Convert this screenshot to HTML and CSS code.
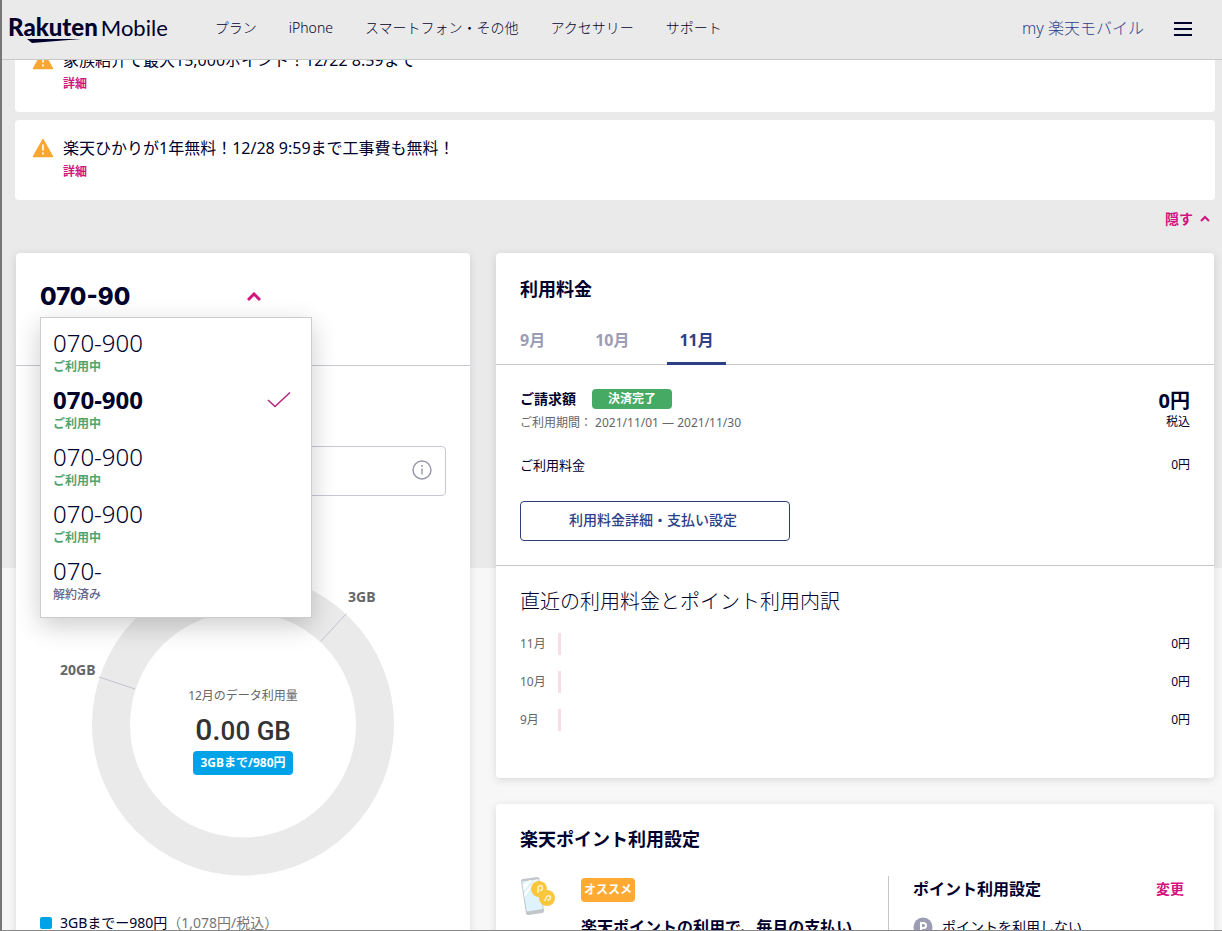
FILE: index.html
```html
<!DOCTYPE html>
<html lang="ja">
<head>
<meta charset="utf-8">
<title>my 楽天モバイル</title>
<meta name="viewport" content="width=device-width, initial-scale=1">
<link rel="stylesheet" href="styles.css">
</head>
<body>
<div class="app">
  <header class="site-header">
    <a class="logo" href="#">
      <span class="logo-brand">Rakuten</span><span class="logo-sub">Mobile</span>
      <svg class="logo-swoosh" viewBox="0 0 54 6" aria-hidden="true"><path d="M0 1H54L5 5Z" fill="currentColor"/></svg>
    </a>
    <nav class="main-nav">
      <a href="#">プラン</a>
      <a href="#">iPhone</a>
      <a href="#">スマートフォン・その他</a>
      <a href="#">アクセサリー</a>
      <a href="#">サポート</a>
    </nav>
    <a class="my-link" href="#">my 楽天モバイル</a>
    <button class="menu-button" type="button" aria-label="メニュー">
      <svg width="18" height="16" viewBox="0 0 18 16"><path d="M0 2H18M0 8H18M0 14H18" stroke="currentColor" stroke-width="2"/></svg>
    </button>
  </header>

  <main class="page">
    <section class="notices">
      <article class="notice">
        <svg class="warn" viewBox="0 0 22 20" aria-hidden="true"><path d="M11 1.500L20.500 18.500H1.500Z" fill="#faa732" stroke="#faa732" stroke-width="1.500" stroke-linejoin="round"/><path d="M11 6.500V12.500M11 14.500V16.500" stroke="#fff" stroke-width="1.600"/></svg>
        <div>
          <p class="notice-text">家族紹介で最大15,000ポイント！12/22 8:59まで</p>
          <a class="notice-link" href="#">詳細</a>
        </div>
      </article>
      <article class="notice">
        <svg class="warn" viewBox="0 0 22 20" aria-hidden="true"><path d="M11 1.500L20.500 18.500H1.500Z" fill="#faa732" stroke="#faa732" stroke-width="1.500" stroke-linejoin="round"/><path d="M11 6.500V12.500M11 14.500V16.500" stroke="#fff" stroke-width="1.600"/></svg>
        <div>
          <p class="notice-text">楽天ひかりが1年無料！12/28 9:59まで工事費も無料！</p>
          <a class="notice-link" href="#">詳細</a>
        </div>
      </article>
    </section>
    <div class="hide-row">
      <button class="hide-button" type="button">隠す
        <svg width="10" height="8" viewBox="0 0 10 8"><path d="M1 6L5 2L9 6" fill="none" stroke="currentColor" stroke-width="2"/></svg>
      </button>
    </div>

    <div class="columns">
      <section class="card usage">
        <div class="line-picker">
          <button class="line-button" type="button" aria-expanded="true">
            <span class="line-number">070-90</span>
            <svg width="14" height="10" viewBox="0 0 14 10"><path d="M1 8L7 2L13 8" fill="none" stroke="currentColor" stroke-width="3"/></svg>
          </button>
          <ul class="line-menu">
            <li><button type="button" class="line-item"><span class="num">070-900</span><span class="status">ご利用中</span></button></li>
            <li><button type="button" class="line-item selected"><span class="num">070-900</span><span class="status">ご利用中</span>
              <svg class="check" width="24" height="18" viewBox="0 0 24 18"><path d="M1 9L8 15.500L23 1.500" fill="none" stroke="currentColor" stroke-width="1.500"/></svg></button></li>
            <li><button type="button" class="line-item"><span class="num">070-900</span><span class="status">ご利用中</span></button></li>
            <li><button type="button" class="line-item"><span class="num">070-900</span><span class="status">ご利用中</span></button></li>
            <li><button type="button" class="line-item"><span class="num">070-</span><span class="status ended">解約済み</span></button></li>
          </ul>
        </div>
        <div class="usage-body">
          <div class="info-box">
            <svg width="20" height="20" viewBox="0 0 20 20"><circle cx="10" cy="10" r="9" fill="none" stroke="currentColor" stroke-width="1.400"/><path d="M10 8.500V14.500M10 5V7" stroke="currentColor" stroke-width="1.400"/></svg>
          </div>
          <div class="donut">
            <svg class="donut-chart" viewBox="0 0 406 304">
              <circle cx="203" cy="151.500" r="132" fill="none" stroke="#eaeaea" stroke-width="38"/>
              <path d="M306.500 40.500L281 68M59 104L95 116" stroke="#c3c3d0" stroke-width="1"/>
              <text x="308" y="29">3GB</text>
              <text x="20" y="102">20GB</text>
            </svg>
            <div class="donut-center">
              <span class="donut-label">12月のデータ利用量</span>
              <span class="donut-value"><b>0.</b>00 GB</span>
              <span class="badge badge-blue">3GBまで/980円</span>
            </div>
          </div>
          <p class="legend"><i class="swatch"></i><span>3GBまでー980円<span class="muted">（1,078円/税込）</span></span></p>
        </div>
      </section>

      <div class="side">
        <section class="card">
          <h2 class="card-title">利用料金</h2>
          <div class="tabs" role="tablist">
            <button type="button" role="tab" class="tab">9月</button>
            <button type="button" role="tab" class="tab">10月</button>
            <button type="button" role="tab" class="tab active" aria-selected="true">11月</button>
          </div>
          <div class="billing">
            <div class="bill-row">
              <div>
                <p class="bill-head"><strong>ご請求額</strong><span class="badge badge-green">決済完了</span></p>
                <p class="period">ご利用期間： 2021/11/01 — 2021/11/30</p>
              </div>
              <div class="total"><strong>0円</strong><span>税込</span></div>
            </div>
            <div class="bill-line"><span>ご利用料金</span><span class="amount">0円</span></div>
            <button type="button" class="outline-button">利用料金詳細・支払い設定</button>
          </div>
          <div class="history">
            <h3 class="history-title">直近の利用料金とポイント利用内訳</h3>
            <ul class="history-list">
              <li><span class="month">11月</span><i class="bar"></i><span class="amount">0円</span></li>
              <li><span class="month">10月</span><i class="bar"></i><span class="amount">0円</span></li>
              <li><span class="month">9月</span><i class="bar"></i><span class="amount">0円</span></li>
            </ul>
          </div>
        </section>

        <section class="card points">
          <h2 class="card-title">楽天ポイント利用設定</h2>
          <div class="points-grid">
            <div class="promo">
              <svg class="promo-icon" width="36" height="40" viewBox="0 0 36 40" aria-hidden="true">
                <path d="M2.500 3L17.500 1Q19 1 19.300 2.500L24 34.500Q24 36.500 22.500 37L8.500 39Q6.500 39 6 37.500L1 5Q1 3.300 2.500 3Z" fill="#c2c6ca"/>
                <path d="M2 5.500L18.500 3.200L22.800 33L6.800 35.500Z" fill="#dff3fc"/>
                <path d="M2.700 9L9 4.500L12 4.100L3.700 15ZM4 18L16 3.500L17.500 3.300L4.500 21Z" fill="#fff"/>
                <circle cx="19" cy="13" r="8" fill="#f9c63d"/>
                <circle cx="27" cy="22" r="8" fill="#f9c63d"/>
                <path d="M18 17V11.500A2.300 2.300 0 1 1 19.500 14.200M24.500 25L27 20.500A2 2 0 1 1 27.500 23.500" fill="none" stroke="#fff4d2" stroke-width="1.500"/>
              </svg>
              <div>
                <span class="badge badge-orange">オススメ</span>
                <p class="promo-text">楽天ポイントの利用で、毎月の支払い</p>
              </div>
            </div>
            <div class="setting">
              <div class="setting-head"><h3>ポイント利用設定</h3><a href="#">変更</a></div>
              <p class="setting-value">
                <svg width="20" height="20" viewBox="0 0 20 20" aria-hidden="true"><circle cx="10" cy="10" r="9.500" fill="#9c9cb4"/><path d="M8 15V6H10.500A2.400 2.400 0 0 1 10.500 11H8" fill="none" stroke="#fff" stroke-width="2"/></svg>
                <span>ポイントを利用しない</span>
              </p>
            </div>
          </div>
        </section>
      </div>
    </div>
  </main>
</div>
</body>
</html>
```
FILE: styles.css
```css
* { box-sizing: border-box; }

body {
  margin: 0;
  font-family: "Noto Sans", "Noto Sans CJK JP", sans-serif;
  font-size: 14px;
  line-height: 20px;
  color: #00002d;
}

p, h2, h3, ul { margin: 0; padding: 0; }
ul { list-style: none; }
a { text-decoration: none; color: inherit; }
svg { flex: none; display: block; }

button {
  font: inherit;
  color: inherit;
  background: none;
  border: 0;
  padding: 0;
  cursor: pointer;
}

.app {
  position: relative;
  height: 100vh;
  overflow: hidden;
  border-left: 2px solid #777;
  border-bottom: 1px solid #888;
  background: linear-gradient(#eaeaea 568px, #f7f7f7 568px);
}

/* Header */
.site-header {
  position: absolute;
  z-index: 10;
  top: 0;
  left: 0;
  right: 0;
  height: 60px;
  display: flex;
  align-items: center;
  padding: 0 30px 4px 6px;
  background: #eaeaea;
  border-bottom: 1px solid #c8c8c8;
}

.logo {
  position: relative;
  display: flex;
  align-items: baseline;
  gap: 3px;
  font-family: Lato, sans-serif;
  font-size: 24px;
  line-height: 28px;
}
.logo-brand { font-weight: 900; }
.logo-sub { font-size: 22px; }
.logo-swoosh {
  position: absolute;
  left: 19px;
  top: 25px;
  width: 54px;
  height: 6px;
}

.main-nav {
  display: flex;
  gap: 32px;
  margin-left: 47px;
  font-weight: 300;
}
.my-link {
  margin-left: auto;
  font-size: 16px;
  font-weight: 300;
  color: #2d3f8c;
}
.menu-button { margin-left: 30px; padding-top: 2px; }

/* Notices */
.page { padding: 32px 7px 0 13px; }

.notices { display: grid; gap: 8px; }
.notice {
  display: flex;
  gap: 9px;
  padding: 16px 17px 20px;
  background: #fff;
  border-radius: 4px;
}
.warn { width: 22px; height: 20px; margin-top: 2px; }
.notice-text { font-size: 16px; line-height: 24px; }
.notice-link {
  display: block;
  margin-top: 4px;
  font-size: 12px;
  line-height: 16px;
  font-weight: 700;
  color: #d2147d;
}

.hide-row {
  display: flex;
  justify-content: flex-end;
  padding: 9px 5px 24px;
}
.hide-button {
  display: flex;
  align-items: center;
  gap: 7px;
  font-weight: 700;
  color: #d2147d;
}

/* Cards */
.columns {
  display: grid;
  grid-template-columns: 454fr 718fr;
  gap: 26px;
  padding: 0 1px;
}
.side { display: grid; gap: 26px; align-content: start; }
.card {
  min-width: 0;
  background: #fff;
  border-radius: 4px;
  box-shadow: 0 2px 8px rgba(0, 0, 45, 0.12);
}
.card-title {
  padding: 24px 24px 0;
  font-size: 18px;
  line-height: 24px;
  font-weight: 700;
}

.badge {
  display: inline-block;
  padding: 0 7px;
  border-radius: 4px;
  color: #fff;
  font-size: 12px;
  line-height: 24px;
  font-weight: 700;
  text-align: center;
}
.badge-blue { background: #00a3e8; }
.badge-green { background: #46aa64; line-height: 20px; padding: 0 16px; }
.badge-orange { background: #ffaa32; padding: 0 3px; }

/* Line picker */
.line-picker {
  position: relative;
  padding: 28px 24px 52px;
  border-bottom: 1px solid #c8c8d2;
}
.line-button {
  display: flex;
  align-items: center;
  justify-content: space-between;
  width: 221px;
  color: #d2147d;
}
.line-number {
  font-family: Inter, sans-serif;
  font-size: 24px;
  line-height: 32px;
  font-weight: 800;
  color: #00002d;
}
.line-menu {
  position: absolute;
  z-index: 5;
  top: 64px;
  left: 24px;
  width: 272px;
  display: grid;
  gap: 9px;
  padding: 9px 12px 14px;
  background: #fff;
  border: 1px solid #ccc;
  box-shadow: 0 8px 24px rgba(0, 0, 0, 0.2);
}
.line-item {
  display: grid;
  grid-template-columns: 1fr auto;
  width: 100%;
  text-align: left;
}
.num { grid-column: 1; font-size: 24px; line-height: 32px; font-weight: 300; }
.selected .num { font-weight: 700; }
.status {
  grid-column: 1;
  font-size: 12px;
  line-height: 16px;
  font-weight: 700;
  color: #50a56e;
}
.ended { color: #64648c; font-weight: 500; }
.check {
  grid-column: 2;
  grid-row: 1;
  align-self: center;
  margin-right: 8px;
  color: #b9237d;
}

/* Usage */
.usage-body { padding: 80px 24px 24px; }
.info-box {
  display: flex;
  align-items: center;
  justify-content: flex-end;
  height: 50px;
  padding: 0 13px 2px 0;
  border: 1px solid #c8c8d2;
  border-radius: 4px;
  color: #9696aa;
}
.donut {
  display: grid;
  place-items: center;
  margin-top: 77px;
}
.donut > * { grid-area: 1 / 1; }
.donut-chart {
  width: 100%;
  height: 304px;
  font-size: 14px;
  font-weight: 700;
  fill: #666;
}
.donut-center {
  display: flex;
  flex-direction: column;
  align-items: center;
  padding-top: 12px;
}
.donut-label { font-size: 12px; line-height: 16px; color: #666; }
.donut-value {
  margin: 10px 0 4px;
  font-family: Roboto, sans-serif;
  font-size: 26px;
  line-height: 32px;
  font-weight: 500;
  color: #333;
}
.donut-value b { font-size: 30px; font-weight: 500; }
.legend {
  display: flex;
  align-items: center;
  gap: 8px;
  margin-top: 36px;
}
.swatch { width: 12px; height: 12px; border-radius: 2px; background: #00a3e8; }
.muted { color: #777; }

/* Billing */
.tabs {
  display: flex;
  gap: 26px;
  margin-top: 19px;
  padding: 0 12px;
  border-bottom: 1px solid #c8c8c8;
}
.tab {
  padding: 8px 12px 10px;
  margin-bottom: -1px;
  border-bottom: 3px solid transparent;
  border-radius: 3px 3px 0 0;
  font-size: 16px;
  line-height: 24px;
  font-weight: 700;
  color: #9c9cb4;
}
.tab.active {
  color: #2d3f87;
  border-bottom-color: #2d3f87;
}
.billing { padding: 24px; border-bottom: 1px solid #c8c8c8; }
.bill-row { display: flex; justify-content: space-between; }
.bill-head { display: flex; gap: 16px; }
.period { margin-top: 6px; font-size: 12px; line-height: 16px; color: #666; }
.total { display: grid; text-align: right; }
.total strong { font-size: 20px; line-height: 24px; }
.total span { font-size: 12px; line-height: 16px; }
.bill-line {
  display: flex;
  justify-content: space-between;
  margin: 24px 0 26px;
  font-size: 13px;
}
.amount { font-size: 12px; }
.outline-button {
  width: 270px;
  max-width: 100%;
  height: 40px;
  padding: 0 4px 3px 0;
  border: 1px solid #2d3f78;
  border-radius: 4px;
  font-weight: 500;
  color: #2d3f87;
}
.history { padding: 20px 24px 47px; }
.history-title { font-size: 20px; line-height: 32px; font-weight: 300; }
.history-list { display: grid; gap: 16px; margin-top: 15px; }
.history-list li {
  display: grid;
  grid-template-columns: 38px 3px 1fr;
  align-items: center;
  font-size: 12px;
}
.history-list .amount { text-align: right; }
.month { color: #666; }
.bar { height: 22px; background: #f8dce8; }

/* Points */
.points { min-height: 240px; }
.points .card-title { padding-top: 23px; }
.points-grid {
  display: grid;
  grid-template-columns: 368fr 302fr;
  margin-top: 25px;
  padding: 0 24px;
}
.promo { display: flex; gap: 25px; }
.promo-text { margin-top: 13px; font-size: 16px; line-height: 24px; font-weight: 700; white-space: nowrap; }
.promo .badge { margin-top: 2px; }
.setting {
  min-height: 120px;
  padding: 1px 6px 0 24px;
  border-left: 1px solid #c8c8c8;
}
.setting-head { display: flex; align-items: center; justify-content: space-between; }
.setting-head h3 { font-size: 16px; line-height: 24px; }
.setting-head a { font-weight: 700; color: #d2147d; }
.setting-value { display: flex; align-items: center; gap: 9px; margin-top: 16px; }
```
